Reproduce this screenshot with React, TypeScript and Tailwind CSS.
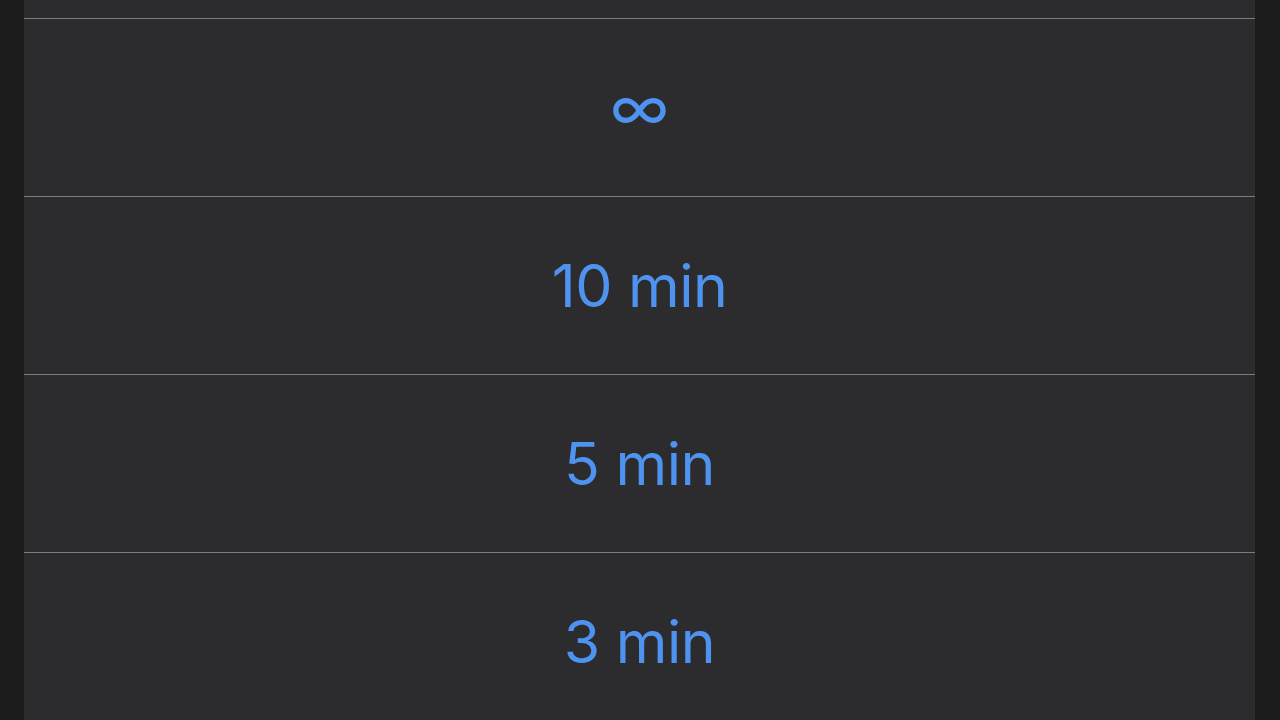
const options = ["∞", "10 min", "5 min", "3 min"];

export default function App() {
  return (
    <div className="flex h-[720px] w-[1280px] overflow-hidden bg-[#1c1b1c] font-['Inter','Liberation_Sans',sans-serif]">
      <div className="ml-[24px] flex w-[1231px] flex-col bg-[#2c2b2d]">
        <div className="h-[18px] shrink-0" />
        {options.map((o) => (
          <div
            key={o}
            className="flex h-[178px] shrink-0 items-center justify-center border-t border-[#7d7d7f]"
          >
            <span
              className={
                o === "∞"
                  ? "text-[63px] leading-none font-normal text-[#4f93f0]"
                  : "text-[59px] leading-none font-normal tracking-[-0.5px] text-[#4f93f0]"
              }
            >
              {o}
            </span>
          </div>
        ))}
      </div>
    </div>
  );
}
